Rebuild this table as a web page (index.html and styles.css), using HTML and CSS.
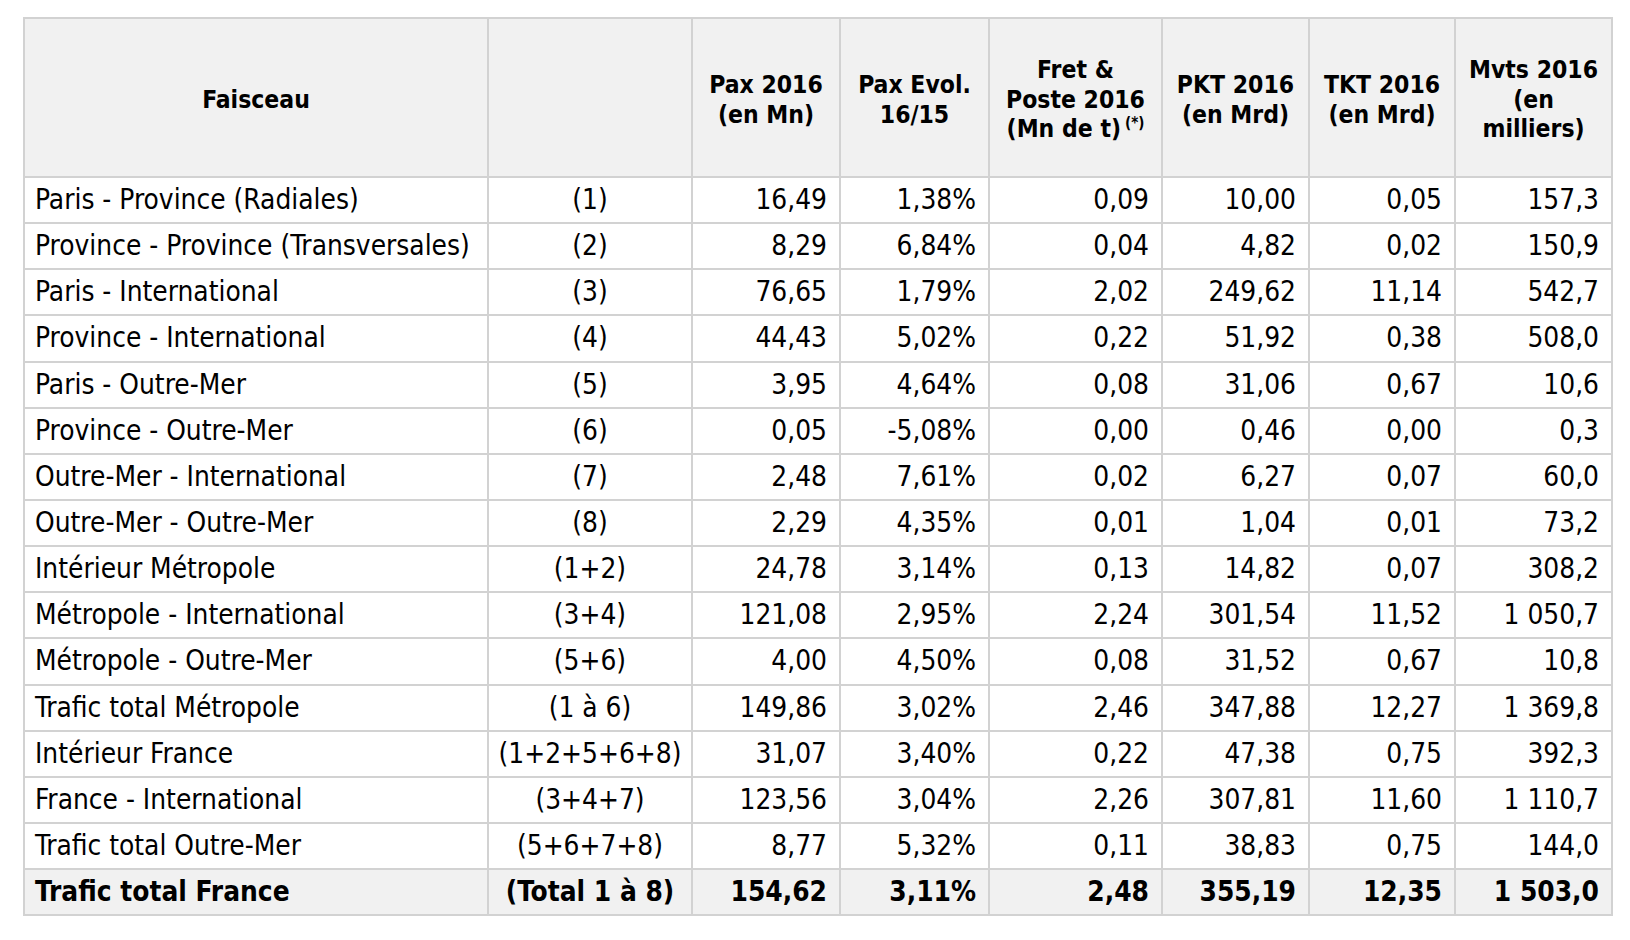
FILE: index.html
```html
<!DOCTYPE html>
<html lang="fr">
<head>
<meta charset="utf-8">
<title>Trafic aérien 2016</title>
<link rel="stylesheet" href="styles.css">
</head>
<body>
<table class="traffic">
  <colgroup>
    <col class="c-name">
    <col class="c-ref">
    <col class="c-pax">
    <col class="c-evol">
    <col class="c-fret">
    <col class="c-pkt">
    <col class="c-tkt">
    <col class="c-mvts">
  </colgroup>
  <thead>
    <tr class="head">
      <th>Faisceau</th>
      <th></th>
      <th>Pax 2016<br>(en Mn)</th>
      <th>Pax Evol.<br>16/15</th>
      <th>Fret &amp;<br>Poste 2016<br>(Mn de t)<sup>(*)</sup></th>
      <th>PKT 2016<br>(en Mrd)</th>
      <th>TKT 2016<br>(en Mrd)</th>
      <th>Mvts 2016<br>(en<br>milliers)</th>
    </tr>
  </thead>
  <tbody>
    <tr><td class="name">Paris - Province (Radiales)</td><td class="ref">(1)</td><td>16,49</td><td>1,38%</td><td>0,09</td><td>10,00</td><td>0,05</td><td>157,3</td></tr>
    <tr><td class="name">Province - Province (Transversales)</td><td class="ref">(2)</td><td>8,29</td><td>6,84%</td><td>0,04</td><td>4,82</td><td>0,02</td><td>150,9</td></tr>
    <tr><td class="name">Paris - International</td><td class="ref">(3)</td><td>76,65</td><td>1,79%</td><td>2,02</td><td>249,62</td><td>11,14</td><td>542,7</td></tr>
    <tr><td class="name">Province - International</td><td class="ref">(4)</td><td>44,43</td><td>5,02%</td><td>0,22</td><td>51,92</td><td>0,38</td><td>508,0</td></tr>
    <tr><td class="name">Paris - Outre-Mer</td><td class="ref">(5)</td><td>3,95</td><td>4,64%</td><td>0,08</td><td>31,06</td><td>0,67</td><td>10,6</td></tr>
    <tr><td class="name">Province - Outre-Mer</td><td class="ref">(6)</td><td>0,05</td><td>-5,08%</td><td>0,00</td><td>0,46</td><td>0,00</td><td>0,3</td></tr>
    <tr><td class="name">Outre-Mer - International</td><td class="ref">(7)</td><td>2,48</td><td>7,61%</td><td>0,02</td><td>6,27</td><td>0,07</td><td>60,0</td></tr>
    <tr><td class="name">Outre-Mer - Outre-Mer</td><td class="ref">(8)</td><td>2,29</td><td>4,35%</td><td>0,01</td><td>1,04</td><td>0,01</td><td>73,2</td></tr>
    <tr><td class="name">Intérieur Métropole</td><td class="ref">(1+2)</td><td>24,78</td><td>3,14%</td><td>0,13</td><td>14,82</td><td>0,07</td><td>308,2</td></tr>
    <tr><td class="name">Métropole - International</td><td class="ref">(3+4)</td><td>121,08</td><td>2,95%</td><td>2,24</td><td>301,54</td><td>11,52</td><td>1&nbsp;050,7</td></tr>
    <tr><td class="name">Métropole - Outre-Mer</td><td class="ref">(5+6)</td><td>4,00</td><td>4,50%</td><td>0,08</td><td>31,52</td><td>0,67</td><td>10,8</td></tr>
    <tr><td class="name">Trafic total Métropole</td><td class="ref">(1 à 6)</td><td>149,86</td><td>3,02%</td><td>2,46</td><td>347,88</td><td>12,27</td><td>1&nbsp;369,8</td></tr>
    <tr><td class="name">Intérieur France</td><td class="ref">(1+2+5+6+8)</td><td>31,07</td><td>3,40%</td><td>0,22</td><td>47,38</td><td>0,75</td><td>392,3</td></tr>
    <tr><td class="name">France - International</td><td class="ref">(3+4+7)</td><td>123,56</td><td>3,04%</td><td>2,26</td><td>307,81</td><td>11,60</td><td>1&nbsp;110,7</td></tr>
    <tr><td class="name">Trafic total Outre-Mer</td><td class="ref">(5+6+7+8)</td><td>8,77</td><td>5,32%</td><td>0,11</td><td>38,83</td><td>0,75</td><td>144,0</td></tr>
    <tr class="total"><td class="name">Trafic total France</td><td class="ref">(Total 1 à 8)</td><td>154,62</td><td>3,11%</td><td>2,48</td><td>355,19</td><td>12,35</td><td>1&nbsp;503,0</td></tr>
  </tbody>
</table>
</body>
</html>
```

FILE: styles.css
```css
html, body {
  margin: 0;
  padding: 0;
  background: #ffffff;
}

body {
  padding: 17px 0 0 23px;
  font-family: "DejaVu Sans Condensed", "DejaVu Sans", sans-serif;
  color: #000;
}

.traffic {
  border-collapse: collapse;
  table-layout: fixed;
  width: 1588px;
  border: 2px solid #cdcdcd;
}

.c-name { width: 464px; }
.c-ref { width: 204px; }
.c-pax { width: 148px; }
.c-evol { width: 149px; }
.c-fret { width: 173px; }
.c-pkt { width: 147px; }
.c-tkt { width: 146px; }
.c-mvts { width: 157px; }

.traffic th,
.traffic td {
  border: 2px solid #d2d2d2;
  padding: 0 12px 0 10px;
  vertical-align: middle;
  white-space: nowrap;
}

.traffic th {
  background: #f1f1f1;
  font-weight: bold;
  font-size: 24.5px;
  line-height: 29.5px;
  text-align: center;
  padding: 4px 4px 0;
}

.traffic th sup {
  font-size: 15px;
  line-height: 0;
  vertical-align: 9px;
  margin-left: 4px;
}

.head {
  height: 159px;
}

.traffic tbody tr {
  height: 46.15px;
}

.traffic td {
  font-size: 27.8px;
  line-height: 30px;
  text-align: right;
}

.traffic td.name {
  text-align: left;
}

.traffic td.ref {
  text-align: center;
  padding: 0 4px;
}

.traffic tr.total td {
  background: #f1f1f1;
  font-weight: bold;
}
```
